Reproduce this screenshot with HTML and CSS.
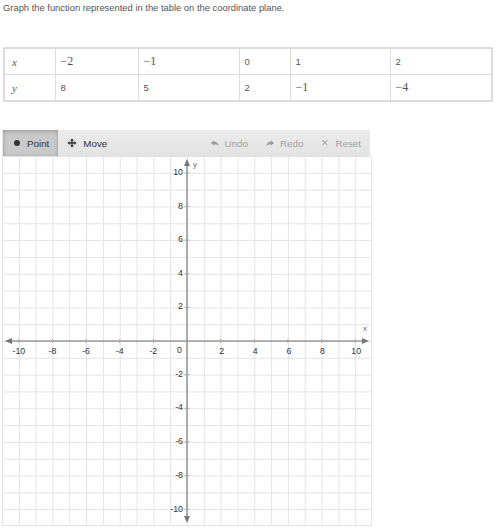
FILE: index.html
```html
<!DOCTYPE html>
<html>
<head>
<meta charset="utf-8">
<link rel="stylesheet" href="styles.css">
</head>
<body>
<p class="prompt">Graph the function represented in the table on the coordinate plane.</p>
<table class="values">
  <colgroup>
    <col class="c1"><col class="c2"><col class="c3"><col class="c4"><col class="c5"><col class="c6">
  </colgroup>
  <tr>
    <td><span class="mvar">x</span></td>
    <td><span class="math">−2</span></td>
    <td><span class="math">−1</span></td>
    <td>0</td>
    <td>1</td>
    <td>2</td>
  </tr>
  <tr>
    <td><span class="mvar">y</span></td>
    <td>8</td>
    <td>5</td>
    <td>2</td>
    <td><span class="math">−1</span></td>
    <td><span class="math">−4</span></td>
  </tr>
</table>

<div class="graph">
  <div class="toolbar">
    <button class="tool active"><span class="dot"></span>Point</button>
    <button class="tool">
      <svg class="ico" width="10" height="10" viewBox="0 0 10 10"><path d="M5 0.5 L7 2.6 H5.7 V4.3 H7.4 V3 L9.5 5 L7.4 7 V5.7 H5.7 V7.4 H7 L5 9.5 L3 7.4 H4.3 V5.7 H2.6 V7 L0.5 5 L2.6 3 V4.3 H4.3 V2.6 H3 Z" fill="#333"/></svg>Move</button>
    <div class="spacer"></div>
    <button class="tool off">
      <svg class="ico" width="8" height="7" viewBox="0 0 8 7"><path d="M0 3 L3.2 0.2 V1.8 C6 1.8 7.6 3.6 7.8 6.6 C7 5 5.6 4.2 3.2 4.2 V5.8 Z" fill="#9a9a9a"/></svg>Undo</button>
    <button class="tool off">
      <svg class="ico" width="8" height="7" viewBox="0 0 8 7"><path d="M8 3 L4.8 0.2 V1.8 C2 1.8 0.4 3.6 0.2 6.6 C1 5 2.4 4.2 4.8 4.2 V5.8 Z" fill="#9a9a9a"/></svg>Redo</button>
    <button class="tool off"><span class="x">✕</span>Reset</button>
  </div>
  <svg class="plane" width="370" height="370" viewBox="0 0 370 370">
    <defs>
      <pattern id="grid" patternUnits="userSpaceOnUse" x="185" y="185" width="16.818" height="16.818">
        <path d="M0.5 0 V16.818 M0 0.5 H16.818" stroke="#e3e3e3" stroke-width="1" fill="none"/>
      </pattern>
    </defs>
    <rect x="0" y="0" width="370" height="370" fill="#fff"/>
    <rect x="0" y="0" width="370" height="370" fill="url(#grid)"/>
    <rect x="0.5" y="0.5" width="369" height="369" fill="none" stroke="#e3e3e3"/>
    <line x1="8" y1="185" x2="362" y2="185" stroke="#9a9a9a" stroke-width="1.6"/>
    <line x1="185" y1="8" x2="185" y2="362" stroke="#9a9a9a" stroke-width="1.6"/>
    <path d="M3 185 L10 182 L10 188 Z" fill="#777"/>
    <path d="M367 185 L360 182 L360 188 Z" fill="#777"/>
    <path d="M185 3 L182 10 L188 10 Z" fill="#777"/>
    <path d="M185 367 L182 360 L188 360 Z" fill="#777"/>
    <path d="M16.82 183 V187 M50.45 183 V187 M84.09 183 V187 M117.73 183 V187 M151.36 183 V187 M218.64 183 V187 M252.27 183 V187 M285.91 183 V187 M319.55 183 V187 M353.18 183 V187
             M182.5 16.82 H187.5 M182.5 50.45 H187.5 M182.5 84.09 H187.5 M182.5 117.73 H187.5 M182.5 151.36 H187.5 M182.5 218.64 H187.5 M182.5 252.27 H187.5 M182.5 285.91 H187.5 M182.5 319.55 H187.5 M182.5 353.18 H187.5"
          stroke="#a8a8a8" stroke-width="1"/>
    <g class="xl" text-anchor="middle">
      <text x="16.82" y="197.5">-10</text>
      <text x="50.45" y="197.5">-8</text>
      <text x="84.09" y="197.5">-6</text>
      <text x="117.73" y="197.5">-4</text>
      <text x="151.36" y="197.5">-2</text>
      <text x="219.64" y="197.5">2</text>
      <text x="253.27" y="197.5">4</text>
      <text x="286.91" y="197.5">6</text>
      <text x="320.55" y="197.5">8</text>
      <text x="354.18" y="197.5">10</text>
      <text x="177.5" y="196.5">0</text>
    </g>
    <g class="yl" text-anchor="end">
      <text x="181" y="18.8">10</text>
      <text x="181" y="52.5">8</text>
      <text x="181" y="86.1">6</text>
      <text x="181" y="119.7">4</text>
      <text x="181" y="153.4">2</text>
      <text x="181" y="220.6">-2</text>
      <text x="181" y="254.3">-4</text>
      <text x="181" y="287.9">-6</text>
      <text x="181" y="321.5">-8</text>
      <text x="181" y="356.2">-10</text>
    </g>
    <text class="al" x="191" y="11">y</text>
    <text class="al" x="361" y="175">x</text>
  </svg>
</div>
</body>
</html>
```
FILE: styles.css
```css
html, body {
  margin: 0;
  background: #fff;
}
body {
  padding: 2px 3px;
  font-family: "Liberation Sans", Arial, sans-serif;
  color: #444;
}
.prompt {
  margin: 0;
  font-size: 9.4px;
  line-height: 12px;
  color: #555;
}
.values {
  margin-top: 33px;
  border-collapse: collapse;
  table-layout: fixed;
  width: 488px;
  border: 2px solid #dcdcdc;
  font-size: 9.5px;
  color: #555;
}
.values col.c1 { width: 51px; }
.values col.c2 { width: 83px; }
.values col.c3 { width: 101px; }
.values col.c4 { width: 51px; }
.values col.c5 { width: 100px; }
.values col.c6 { width: 102px; }
.values td {
  border: 1px solid #dcdcdc;
  height: 25px;
  padding: 0 0 0 5px;
  vertical-align: middle;
}
.math {
  font-family: "Liberation Serif", "Times New Roman", serif;
  font-size: 12px;
  color: #555;
}
.mvar {
  font-family: "Liberation Serif", "Times New Roman", serif;
  font-style: italic;
  font-size: 11px;
  color: #555;
  padding-left: 2px;
}
.graph {
  margin-top: 28px;
  margin-left: -1px;
  width: 370px;
}
.toolbar {
  display: flex;
  align-items: stretch;
  height: 26px;
  background: linear-gradient(#ececec, #e2e2e2);
  width: 368px;
}
.tool {
  display: inline-flex;
  align-items: center;
  gap: 6px;
  border: 0;
  background: transparent;
  margin: 0;
  padding: 0 9px;
  font-family: "Liberation Sans", Arial, sans-serif;
  font-size: 9.8px;
  color: #333;
  cursor: pointer;
}
.tool.active {
  margin-left: 1px;
  padding: 0 9px 0 11px;
  gap: 7px;
  background: #c9c9c9;
  box-shadow: inset 0 1px 4px rgba(0,0,0,0.25);
}
.tool.off {
  color: #a3a3a3;
}
.tool .ico {
  display: block;
}
.dot {
  width: 6px;
  height: 6px;
  border-radius: 50%;
  background: #333;
}
.x {
  font-size: 9px;
  color: #a3a3a3;
}
.spacer {
  flex: 1;
}
.plane {
  display: block;
}
.plane text {
  font-family: "Liberation Sans", Arial, sans-serif;
  font-size: 8.8px;
  fill: #333;
}
.plane .al {
  fill: #666;
  font-size: 8px;
}
```
